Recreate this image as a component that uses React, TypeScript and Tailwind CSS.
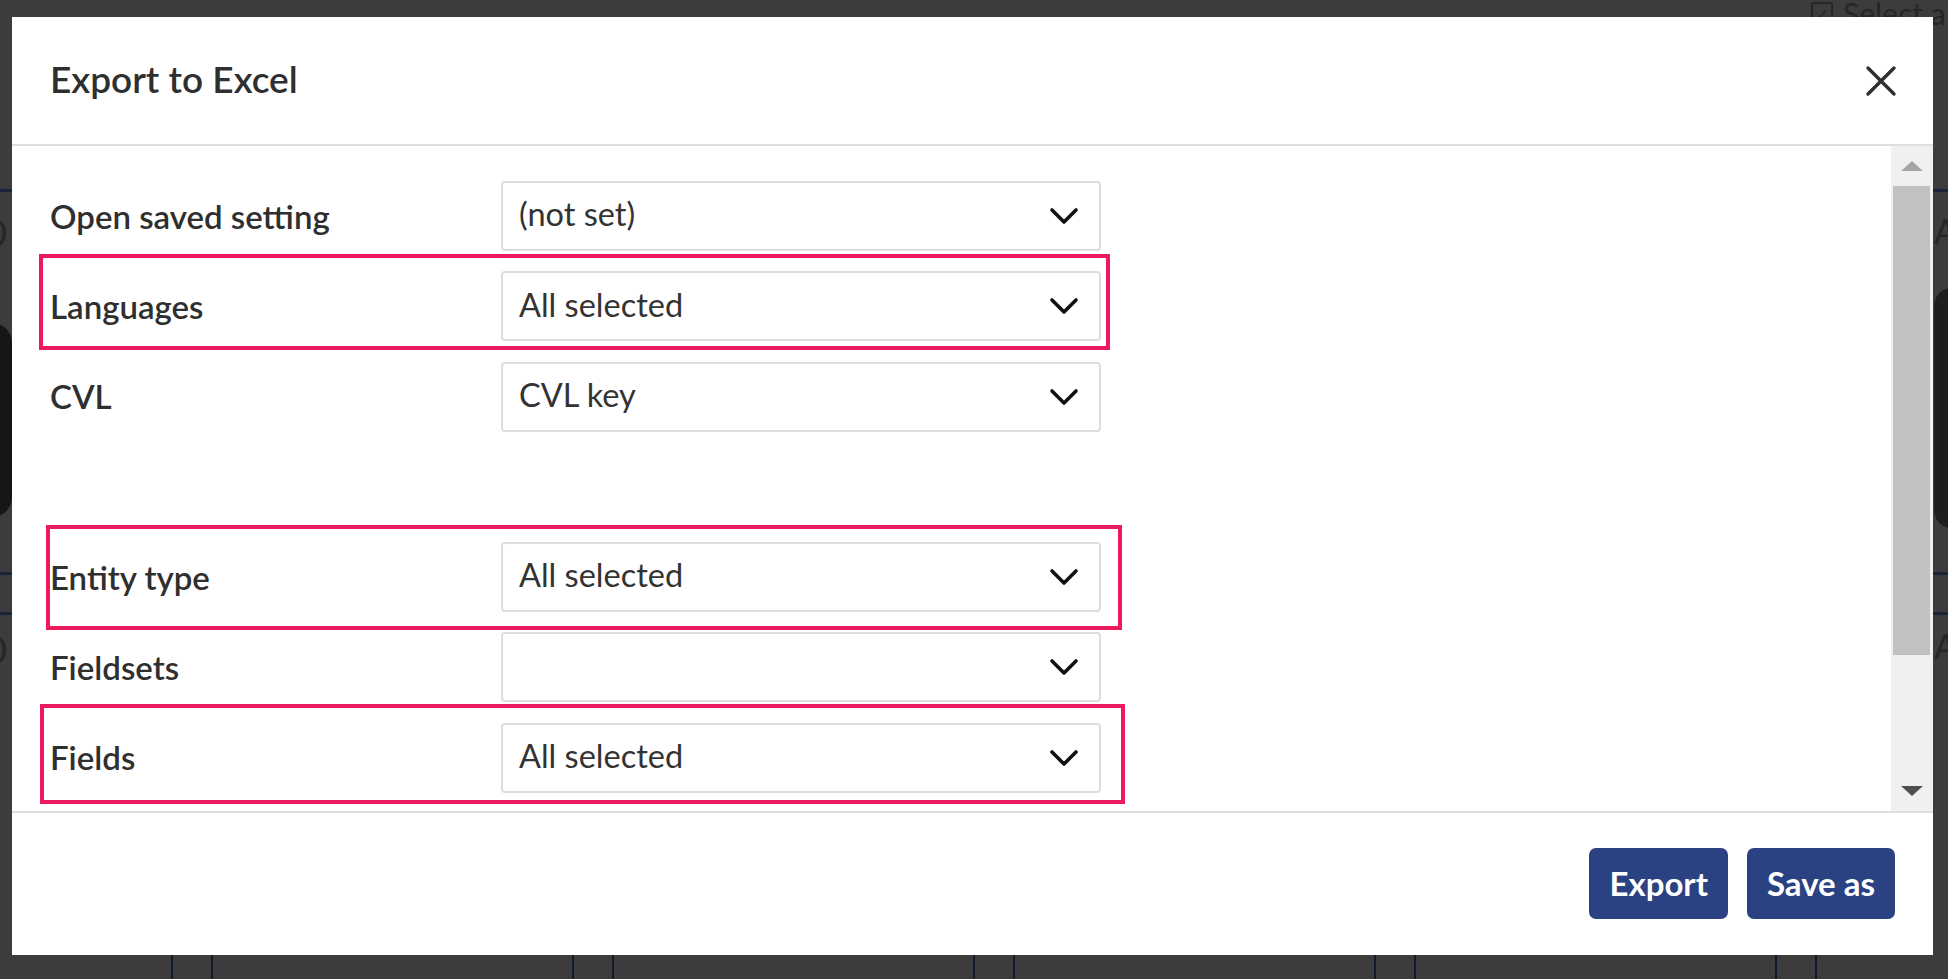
import { type ReactNode } from 'react';

const font = { fontFamily: 'Lato, "Open Sans", "Liberation Sans", sans-serif' };

function Chevron() {
  return (
    <svg width="30" height="18" viewBox="0 0 30 18" fill="none" className="shrink-0">
      <path d="M3 3 L15 15 L27 3" stroke="#111" strokeWidth="3.6" strokeLinecap="round" strokeLinejoin="round" />
    </svg>
  );
}

function Select({ value }: { value: string }) {
  return (
    <div className="flex items-center justify-between w-[600px] h-[70px] border-2 border-[#dedede] rounded-[4px] pl-[16px] pr-[20px]">
      <span className="text-[32.5px] text-[#333] leading-none mb-[3px]">{value}</span>
      <Chevron />
    </div>
  );
}

function Row({ label, value }: { label: string; value: string }) {
  return (
    <div className="flex items-center h-[70px]">
      <div className="w-[451px] text-[33px] font-semibold text-[#2f2f2f] leading-none">{label}</div>
      <Select value={value} />
    </div>
  );
}

function Button({ children }: { children: ReactNode }) {
  return (
    <button className="h-[71px] px-[20px] rounded-[7px] bg-[#2a4282] text-white text-[33px] font-bold leading-none">
      {children}
    </button>
  );
}

const rows = [
  { label: 'Open saved setting', value: '(not set)' },
  { label: 'Languages', value: 'All selected' },
  { label: 'CVL', value: 'CVL key' },
  null,
  { label: 'Entity type', value: 'All selected' },
  { label: 'Fieldsets', value: '' },
  { label: 'Fields', value: 'All selected' },
];

export default function App() {
  return (
    <div className="relative w-[1948px] h-[979px] overflow-hidden bg-[#3c3c3c] flex flex-col" style={font}>
      {/* page behind the overlay */}
      <div className="absolute top-[-9px] left-[1811px] flex items-center gap-[10px] text-[#262626] text-[30px]">
        <span className="w-[22px] h-[24px] border-2 border-[#262626] rounded-[3px] text-[18px] leading-none flex items-center justify-center">✓</span>
        <span>Select a</span>
      </div>
      <div className="absolute left-0 right-0 top-[189px] h-[3px] bg-[#172538]" />
      <div className="absolute left-0 right-0 top-[572px] h-[3px] bg-[#172538]" />
      <div className="absolute left-0 right-0 top-[612px] h-[3px] bg-[#172538]" />
      <div className="absolute left-[-14px] top-[205px] text-[36px] text-[#262626]">0</div>
      <div className="absolute left-[-14px] top-[622px] text-[36px] text-[#262626]">0</div>
      <div className="absolute left-[-30px] top-[323px] w-[42px] h-[194px] rounded-[20px] bg-[#161616]" />
      <div className="absolute left-[1934px] top-[205px] text-[34px] text-[#262626]">A</div>
      <div className="absolute left-[1934px] top-[620px] text-[34px] text-[#262626]">A</div>
      <div className="absolute left-[1934px] top-[288px] w-[40px] h-[240px] rounded-[18px] bg-[#1f1d1b]" />

      {/* dialog */}
      <div className="relative z-10 mt-[17px] ml-[12px] w-[1921px] h-[938px] bg-white flex flex-col">
        <div className="h-[129px] shrink-0 border-b-2 border-[#dedede] flex items-center justify-between pl-[38px] pr-[36px]">
          <h2 className="text-[37px] font-semibold text-[#2f2f2f] leading-none mb-[5px]">Export to Excel</h2>
          <svg width="32" height="32" viewBox="0 0 32 32" fill="none">
            <path d="M3 3 L29 29 M29 3 L3 29" stroke="#2f2f2f" strokeWidth="3.4" strokeLinecap="round" />
          </svg>
        </div>

        <div className="h-[667px] shrink-0 border-b-2 border-[#dedede] flex">
          <div className="relative flex-1 overflow-hidden pl-[38px] pt-[35px]">
            <div className="flex flex-col gap-[20.3px]">
              {rows.map((r, i) =>
                r ? <Row key={i} label={r.label} value={r.value} /> : <div key={i} className="h-[70px]" />,
              )}
            </div>
            {/* highlight annotations */}
            <div className="absolute left-[27px] top-[108px] w-[1071px] h-[96px] border-4 border-[#eb1a5c]" />
            <div className="absolute left-[34px] top-[379px] w-[1076px] h-[105px] border-4 border-[#eb1a5c]" />
            <div className="absolute left-[28px] top-[558px] w-[1085px] h-[100px] border-4 border-[#eb1a5c]" />
          </div>
          <div className="w-[42px] shrink-0 bg-[#f0f0f0] flex flex-col items-center">
            <div className="h-[40px] w-full flex items-center justify-center">
              <div className="w-0 h-0 border-l-[11px] border-r-[11px] border-b-[10px] border-l-transparent border-r-transparent border-b-[#a3a3a3]" />
            </div>
            <div className="w-[37px] h-[469px] bg-[#c1c1c1] ml-[-1px]" />
            <div className="flex-1" />
            <div className="h-[40px] w-full flex items-center justify-center">
              <div className="w-0 h-0 border-l-[11px] border-r-[11px] border-t-[10px] border-l-transparent border-r-transparent border-t-[#505050]" />
            </div>
          </div>
        </div>

        <div className="flex-1 flex justify-end items-start gap-[19px] pt-[35px] pr-[38px]">
          <Button>Export</Button>
          <Button>Save as</Button>
        </div>
      </div>

      {/* table column edges below the dialog */}
      <div className="flex-1 flex pl-[171px]">
        {[0, 1, 2, 3, 4].map((i) => (
          <div key={i} className="w-[401px] shrink-0 flex gap-[38px]">
            <div className="w-[2px] bg-[#0d1b2c]" />
            <div className="w-[2px] bg-[#0d1b2c]" />
          </div>
        ))}
      </div>
    </div>
  );
}
